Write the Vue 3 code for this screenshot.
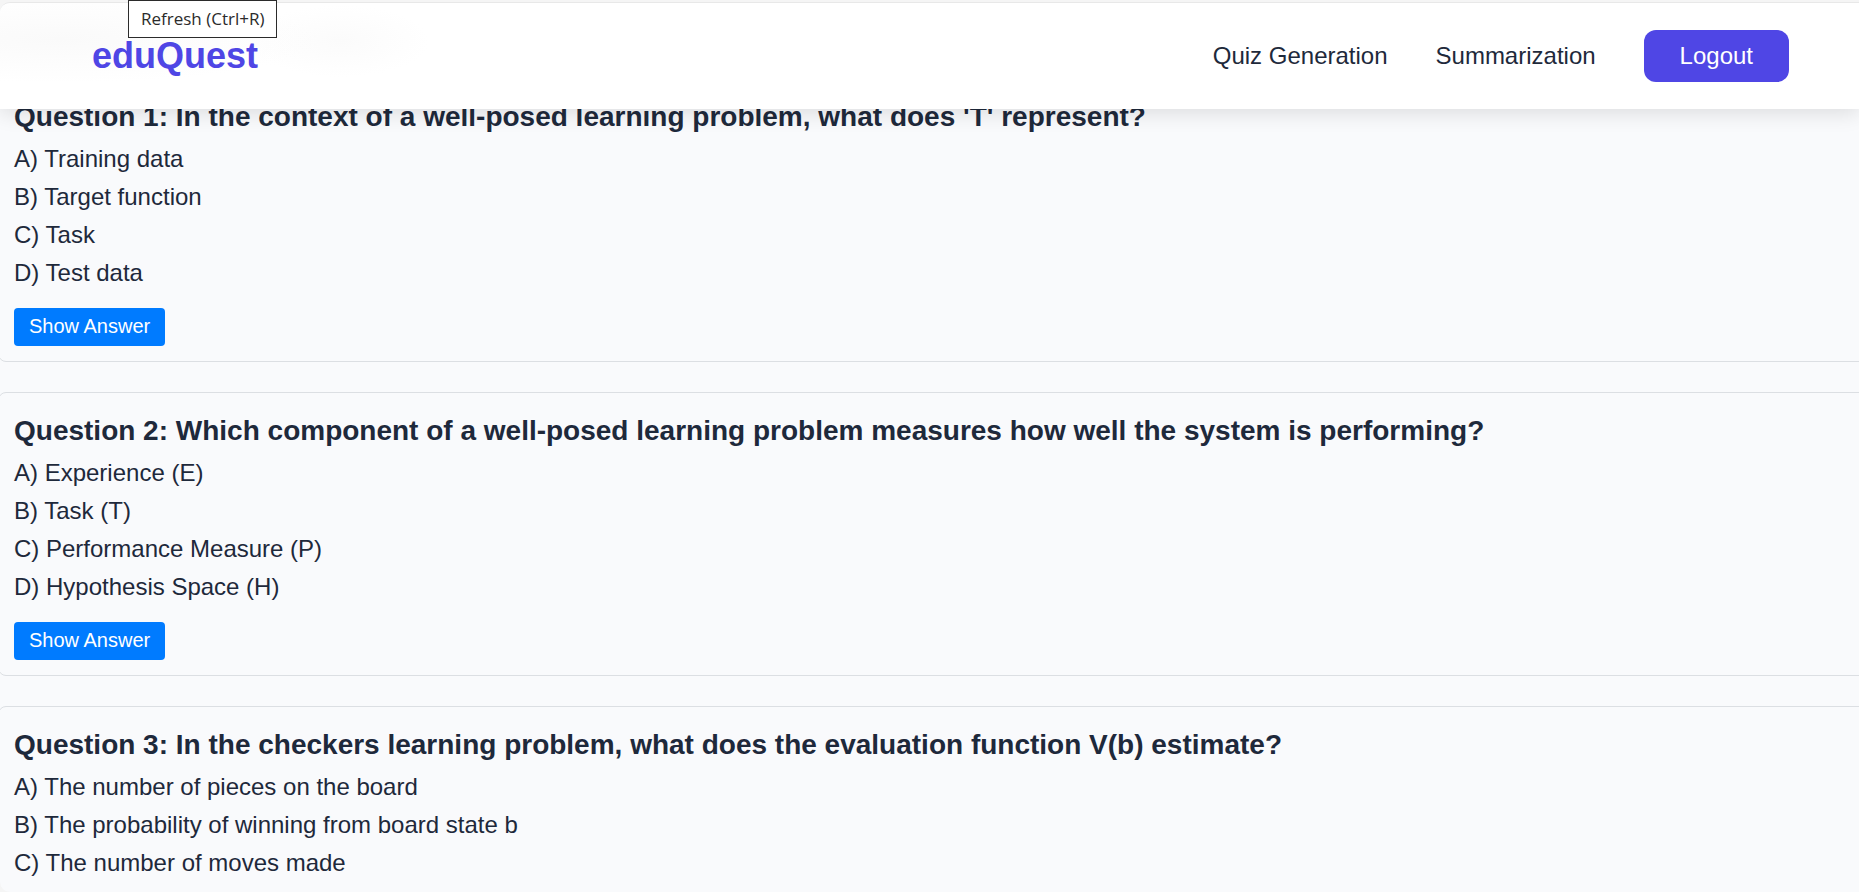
<script setup>
import { ref } from 'vue'

const questions = [
  {
    title: "Question 1: In the context of a well-posed learning problem, what does 'T' represent?",
    options: ['A) Training data', 'B) Target function', 'C) Task', 'D) Test data'],
    answer: 'C) Task',
  },
  {
    title: 'Question 2: Which component of a well-posed learning problem measures how well the system is performing?',
    options: ['A) Experience (E)', 'B) Task (T)', 'C) Performance Measure (P)', 'D) Hypothesis Space (H)'],
    answer: 'C) Performance Measure (P)',
  },
  {
    title: 'Question 3: In the checkers learning problem, what does the evaluation function V(b) estimate?',
    options: ['A) The number of pieces on the board', 'B) The probability of winning from board state b', 'C) The number of moves made'],
    answer: 'B) The probability of winning from board state b',
  },
]
const shown = ref({})
</script>

<template>
  <div class="window">
    <div class="page">
      <header class="navbar">
        <a class="logo" href="#">eduQuest</a>
        <nav class="links">
          <a href="#">Quiz Generation</a>
          <a href="#">Summarization</a>
          <button type="button" class="logout">Logout</button>
        </nav>
      </header>
      <main class="quiz">
        <section v-for="(q, i) in questions" :key="i" class="card">
          <h3>{{ q.title }}</h3>
          <ul>
            <li v-for="o in q.options" :key="o">{{ o }}</li>
          </ul>
          <button v-if="q.options.length > 3" type="button" class="show" @click="shown[i] = !shown[i]">Show Answer</button>
          <p v-if="shown[i]">{{ q.answer }}</p>
        </section>
      </main>
    </div>
    <div class="tooltip" role="tooltip">Refresh (Ctrl+R)</div>
  </div>
</template>

<style>
body {
  background: #f5f5f5;
}
</style>

<style scoped>
.window {
  position: relative;
  box-sizing: border-box;
  height: 100vh;
  padding-top: 2px;
  overflow: hidden;
  font-family: Arial, "Liberation Sans", sans-serif;
  color: #1e293b;
}
.page {
  box-sizing: border-box;
  height: 100%;
  overflow: hidden;
  border-top: 1px solid #e8e8e8;
  border-radius: 10px 0 0 10px;
  background: #f9fafc;
}
.navbar {
  position: relative;
  z-index: 1;
  display: flex;
  align-items: center;
  justify-content: space-between;
  box-sizing: border-box;
  height: 106px;
  padding: 0 70px 0 92px;
  background:
    radial-gradient(ellipse 260px 44px at 60px 36px, #fafafa, transparent),
    radial-gradient(ellipse 90px 36px at 340px 38px, #fbfbfb, transparent),
    #fff;
  box-shadow: 0 4px 20px rgba(0, 0, 0, 0.12);
}
.logo {
  font-size: 36px;
  font-weight: bold;
  color: #4f46e5;
  text-decoration: none;
}
.links {
  display: flex;
  align-items: center;
  gap: 48px;
  font-size: 24px;
}
.links a {
  color: inherit;
  text-decoration: none;
}
.logout {
  height: 52px;
  padding: 0 36px;
  border: 0;
  border-radius: 12px;
  background: #4f46e5;
  color: #fff;
  font: inherit;
}
.quiz {
  display: flex;
  flex-direction: column;
  gap: 30px;
  margin: -31px -16px 0 -2px;
}
.card {
  padding: 15px;
  border: 1px solid #dcdfe3;
  border-radius: 8px;
}
h3 {
  margin: 0;
  font-size: 28px;
  line-height: 46px;
}
ul {
  margin: 0;
  padding: 0;
  list-style: none;
}
li {
  font-size: 24px;
  line-height: 38px;
}
.show {
  display: block;
  height: 38px;
  margin-top: 16px;
  padding: 0 15px 2px;
  border: 0;
  border-radius: 4px;
  background: #007bff;
  color: #fff;
  font-family: inherit;
  font-size: 20px;
}
.tooltip {
  position: absolute;
  z-index: 2;
  top: 0;
  left: 128px;
  padding: 0 12px;
  border: 1px solid #2b2b2b;
  background: #fff;
  color: #2b2b2b;
  font: 17px/36px "Segoe UI", "Open Sans", sans-serif;
}
</style>
